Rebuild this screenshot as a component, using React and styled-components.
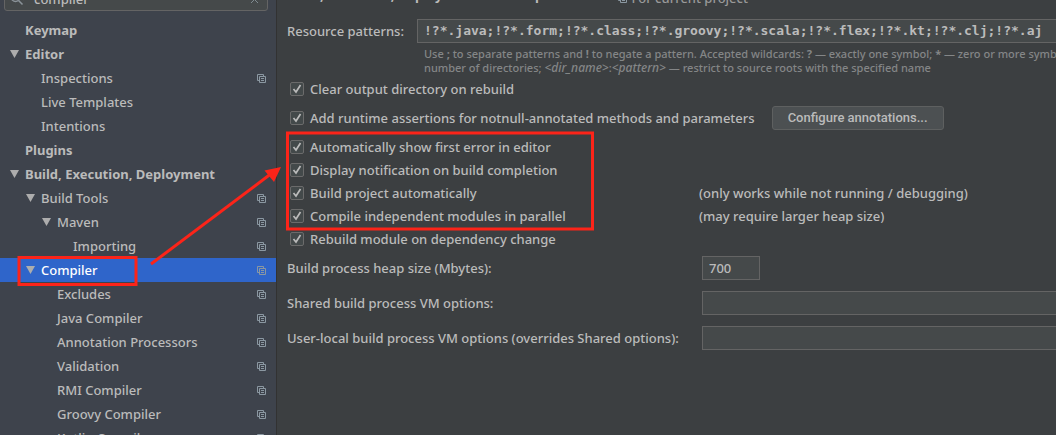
import React from "react";
import styled, { createGlobalStyle } from "styled-components";

const ui = `"Noto Sans", "Lucida Grande", sans-serif`;
const red = "#fc2419";

const GlobalStyle = createGlobalStyle`
  *, *::before, *::after { box-sizing: border-box; }
  html, body { margin: 0; background: #3c3f41; }
  body { overflow: hidden; font: 500 13px/24px ${ui}; color: #bbbbbb; }
  button, input { font: inherit; color: inherit; }
`;

const Window = styled.div`
  position: relative;
  display: flex;
  height: 100vh;
  overflow: hidden;
`;

const Sidebar = styled.nav`
  flex: none;
  width: 277px;
  background: #3e434c;
  border-right: 1px solid #323232;
`;

const SearchBox = styled.label`
  display: flex;
  align-items: center;
  gap: 8px;
  height: 24px;
  margin: -13px 8px 7px 4px;
  padding: 0 8px 0 5px;
  background: #45494a;
  border: 1px solid #646464;
  border-radius: 3px;
`;

const SearchInput = styled.input`
  flex: 1;
  min-width: 0;
  padding: 0;
  border: 0;
  outline: 0;
  background: none;
`;

const ClearButton = styled.button`
  display: flex;
  padding: 0;
  border: 0;
  background: none;
`;

const Tree = styled.ul`
  margin: 0;
  padding: 0;
  list-style: none;
`;

const TreeRow = styled.li`
  display: flex;
  align-items: center;
  height: 24px;
  padding: 0 10px 0 ${(p) => 9 + p.$level * 16}px;
  font-weight: ${(p) => (p.$bold ? 700 : "inherit")};
  color: ${(p) => (p.$selected ? "#ffffff" : "#bbbbbb")};
  background: ${(p) => (p.$selected ? "#2f65ca" : "transparent")};
`;

const Twisty = styled.span`
  flex: none;
  display: flex;
  width: 16px;
`;

const RowLabel = styled.span`
  flex: 1;
  white-space: nowrap;
`;

const Content = styled.main`
  flex: 1;
  min-width: 0;
  padding-left: 10px;
  overflow: hidden;
  white-space: nowrap;
`;

const Header = styled.header`
  display: flex;
  align-items: flex-start;
  gap: 54px;
  margin-top: -14px;
  height: 24px;
`;

const Title = styled.h1`
  display: flex;
  gap: 12px;
  margin: 0;
  font-size: 13px;
  line-height: 18px;
`;

const Scope = styled.span`
  display: flex;
  align-items: center;
  gap: 4px;
  color: #999999;
`;

const Field = styled.div`
  display: flex;
  align-items: center;
  margin-top: ${(p) => p.$gap}px;
`;

const FieldLabel = styled.label`
  flex: none;
  width: ${(p) => p.$width}px;
`;

const TextField = styled.input`
  flex: ${(p) => (p.$width ? "none" : "1 0 auto")};
  width: ${(p) => (p.$width ? `${p.$width}px` : "auto")};
  height: 24px;
  padding: 0 6px;
  border: 1px solid #646464;
  border-right-width: ${(p) => (p.$width ? 1 : 0)}px;
  border-radius: 0;
  outline: 0;
  background: #45494a;
`;

const PatternField = styled(TextField)`
  font-family: "DejaVu Sans Mono", monospace;
  font-weight: 700;
`;

const Hint = styled.p`
  margin: 4px 0 2px 137px;
  font-size: 11px;
  line-height: 14px;
  color: #848687;
  & i { font-size: 12px; }
`;

const CheckRow = styled.div`
  display: flex;
  align-items: center;
  height: ${(p) => p.$height || 23}px;
`;

const CheckLabel = styled.label`
  display: flex;
  align-items: center;
  gap: 6px;
  min-width: ${(p) => (p.$noted ? 412 : 0)}px;
  padding-left: 3px;
`;

const CheckBox = styled.input`
  appearance: none;
  width: 14px;
  height: 14px;
  margin: 0;
  border: 1px solid #6b6b6b;
  border-radius: 2px;
  background: #43494a;
  & + svg { visibility: hidden; }
  &:checked + svg { visibility: visible; }
`;

const CheckHolder = styled.span`
  display: grid;
  & > * { grid-area: 1 / 1; }
  & > svg { pointer-events: none; }
`;

const ConfigureButton = styled.button`
  height: 24px;
  margin-left: 17px;
  padding: 0 15px;
  font-family: Roboto, Arial, sans-serif;
  line-height: 22px;
  border: 1px solid #5e6060;
  border-radius: 3px;
  background: #4c5052;
`;

const Annotations = styled.svg`
  position: absolute;
  left: 0;
  top: 0;
  pointer-events: none;
`;

const Arrow = () => (
  <svg width="10" height="10" viewBox="0 0 10 10" aria-hidden="true">
    <path d="M1 1h9L5.500 9z" fill="#adadad" />
  </svg>
);

const ProjectIcon = () => (
  <svg width="9" height="9" viewBox="0 0 9 9" fill="none" stroke="#8b98a2" aria-hidden="true">
    <path d="M2.500 6.500H.500v-6h6v2M2.500 2.500h6v6h-6zM4 4.500h3M4 6.500h3" />
  </svg>
);

const tree = [
  { text: "Keymap", level: 0, bold: true },
  { text: "Editor", level: 0, bold: true, open: true },
  { text: "Inspections", level: 1, icon: true },
  { text: "Live Templates", level: 1 },
  { text: "Intentions", level: 1 },
  { text: "Plugins", level: 0, bold: true },
  { text: "Build, Execution, Deployment", level: 0, bold: true, open: true },
  { text: "Build Tools", level: 1, open: true, icon: true },
  { text: "Maven", level: 2, open: true, icon: true },
  { text: "Importing", level: 3, icon: true },
  { text: "Compiler", level: 1, open: true, icon: true, selected: true },
  { text: "Excludes", level: 2, icon: true },
  { text: "Java Compiler", level: 2, icon: true },
  { text: "Annotation Processors", level: 2, icon: true },
  { text: "Validation", level: 2, icon: true },
  { text: "RMI Compiler", level: 2, icon: true },
  { text: "Groovy Compiler", level: 2, icon: true },
  { text: "Kotlin Compiler", level: 2, icon: true },
];

const Check = ({ text, note, height, children }) => (
  <CheckRow $height={height}>
    <CheckLabel $noted={Boolean(note)}>
      <CheckHolder>
        <CheckBox type="checkbox" defaultChecked />
        <svg width="14" height="14" viewBox="0 0 14 14" fill="none" stroke="#bbbbbb" strokeWidth="1.700" aria-hidden="true">
          <path d="M3.500 7l2.500 3 4.500-7" />
        </svg>
      </CheckHolder>
      {text}
    </CheckLabel>
    {note && <span>{note}</span>}
    {children}
  </CheckRow>
);

export default function App() {
  return (
    <Window>
      <GlobalStyle />
      <Sidebar>
        <SearchBox>
          <svg width="16" height="14" viewBox="0 0 16 14" fill="none" stroke="#8b9399" strokeWidth="1.500" aria-hidden="true">
            <circle cx="5.500" cy="5.500" r="4" />
            <path d="M8.500 8.500l4 4M12 5l1.500 2L15 5" />
          </svg>
          <SearchInput type="text" defaultValue="compiler" aria-label="Search settings" />
          <ClearButton type="button" aria-label="Clear">
            <svg width="9" height="9" viewBox="0 0 9 9" stroke="#7f8b91" aria-hidden="true">
              <path d="M1 1l7 7M8 1L1 8" />
            </svg>
          </ClearButton>
        </SearchBox>
        <Tree>
          {tree.map((n) => (
            <TreeRow key={n.text} $level={n.level} $bold={n.bold} $selected={n.selected}>
              <Twisty>{n.open && <Arrow />}</Twisty>
              <RowLabel>{n.text}</RowLabel>
              {n.icon && <ProjectIcon />}
            </TreeRow>
          ))}
        </Tree>
      </Sidebar>
      <Content>
        <Header>
          <Title>
            <span>Build, Execution, Deployment</span>
            <span>›</span>
            <span>Compiler</span>
          </Title>
          <Scope><ProjectIcon />For current project</Scope>
        </Header>
        <Field $gap={9}>
          <FieldLabel htmlFor="patterns" $width={130}>Resource patterns:</FieldLabel>
          <PatternField
            id="patterns"
            type="text"
            defaultValue="!?*.java;!?*.form;!?*.class;!?*.groovy;!?*.scala;!?*.flex;!?*.kt;!?*.clj;!?*.aj"
          />
        </Field>
        <Hint>
          Use <b>;</b> to separate patterns and <b>!</b> to negate a pattern. Accepted wildcards: <b>?</b> — exactly one symbol; <b>*</b> — zero or more symbols;
          <br />
          number of directories; <i>&lt;dir_name&gt;</i>:<i>&lt;pattern&gt;</i> — restrict to source roots with the specified name
        </Hint>
        <Check text="Clear output directory on rebuild" />
        <Check height={35} text="Add runtime assertions for notnull-annotated methods and parameters">
          <ConfigureButton type="button">Configure annotations...</ConfigureButton>
        </Check>
        <Check text="Automatically show first error in editor" />
        <Check text="Display notification on build completion" />
        <Check text="Build project automatically" note="(only works while not running / debugging)" />
        <Check text="Compile independent modules in parallel" note="(may require larger heap size)" />
        <Check text="Rebuild module on dependency change" />
        <Field $gap={6}>
          <FieldLabel htmlFor="heap" $width={415}>Build process heap size (Mbytes):</FieldLabel>
          <TextField id="heap" type="text" defaultValue="700" $width={58} />
        </Field>
        <Field $gap={11}>
          <FieldLabel htmlFor="shared" $width={415}>Shared build process VM options:</FieldLabel>
          <TextField id="shared" type="text" />
        </Field>
        <Field $gap={11}>
          <FieldLabel htmlFor="local" $width={415}>User-local build process VM options (overrides Shared options):</FieldLabel>
          <TextField id="local" type="text" />
        </Field>
      </Content>
      <Annotations width="600" height="300" viewBox="0 0 600 300" fill="none" stroke={red} strokeWidth="3" aria-hidden="true">
        <path d="M19 257.500h117v27H19zM287.500 133h305v96h-305z" />
        <path d="M151 264L272 173" />
        <path d="M281 167L264.500 170.500 274 182z" fill={red} stroke="none" />
      </Annotations>
    </Window>
  );
}
